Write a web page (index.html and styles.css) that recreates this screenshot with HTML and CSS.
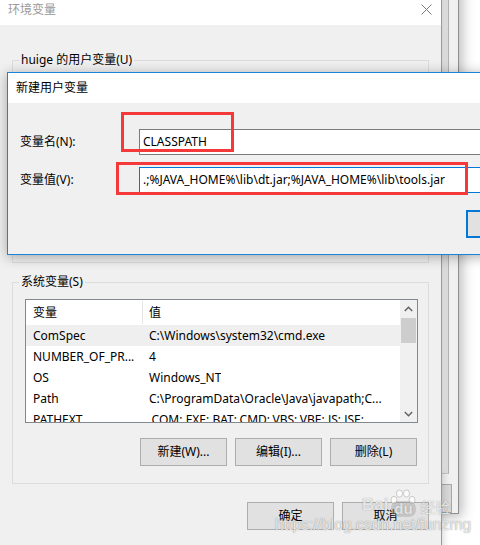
FILE: index.html
```html
<!DOCTYPE html>
<html lang="zh-CN">
<head>
<meta charset="utf-8">
<title>新建用户变量</title>
<link rel="stylesheet" href="styles.css">
</head>
<body>
<div class="desktop">
  <div class="syswin">
    <div class="sys-panel"></div>
    <div class="sys-btn"></div>
  </div>

  <div class="envwin">
    <div class="titlebar env-title">
      <span class="title-text inactive">环境变量</span>
      <svg class="close" width="11" height="11" viewBox="0 0 11 11"><path d="M0.5 0.5 L10.5 10.5 M10.5 0.5 L0.5 10.5" stroke="#7a7a7a" stroke-width="1" fill="none"/></svg>
    </div>
    <div class="env-body">
      <div class="group user-group">
        <div class="group-title">huige 的用户变量(U)</div>
      </div>
      <div class="group sys-group">
        <div class="group-title">系统变量(S)</div>
        <div class="listview">
          <div class="list-main">
            <div class="list-head"><span class="c1">变量</span><span class="c2">值</span></div>
            <div class="row sel"><span class="c1">ComSpec</span><span class="c2">C:\Windows\system32\cmd.exe</span></div>
            <div class="row"><span class="c1">NUMBER_OF_PR...</span><span class="c2">4</span></div>
            <div class="row"><span class="c1">OS</span><span class="c2">Windows_NT</span></div>
            <div class="row"><span class="c1">Path</span><span class="c2">C:\ProgramData\Oracle\Java\javapath;C...</span></div>
            <div class="row"><span class="c1">PATHEXT</span><span class="c2">.COM;.EXE;.BAT;.CMD;.VBS;.VBE;.JS;.JSE;...</span></div>
          </div>
          <div class="scrollbar">
            <div class="sb-arrow"><svg width="9" height="6" viewBox="0 0 9 6"><path d="M0.8 5 L4.5 1.3 L8.2 5" stroke="#606060" stroke-width="1.4" fill="none"/></svg></div>
            <div class="sb-track"><div class="sb-thumb"></div></div>
            <div class="sb-arrow"><svg width="9" height="6" viewBox="0 0 9 6"><path d="M0.8 1 L4.5 4.7 L8.2 1" stroke="#606060" stroke-width="1.4" fill="none"/></svg></div>
          </div>
        </div>
        <div class="btn-row group-btns">
          <button class="btn">新建(W)...</button>
          <button class="btn">编辑(I)...</button>
          <button class="btn">删除(L)</button>
        </div>
      </div>
      <div class="btn-row bottom-btns">
        <button class="btn">确定</button>
        <button class="btn">取消</button>
      </div>
    </div>
  </div>

  <div class="dialog">
    <div class="titlebar dlg-title"><span class="title-text">新建用户变量</span></div>
    <div class="dlg-body">
      <div class="field"><span class="field-label">变量名(N):</span><div class="input">CLASSPATH</div></div>
      <div class="field second"><span class="field-label">变量值(V):</span><div class="input focus">.;%JAVA_HOME%\lib\dt.jar;%JAVA_HOME%\lib\tools.jar</div></div>
      <div class="dlg-buttons">
        <button class="btn default">确定</button>
        <button class="btn">取消</button>
      </div>
    </div>
  </div>

  <div class="mark mark-name"></div>
  <div class="mark mark-value"></div>

  <div class="wm-baidu">
    <span class="wm-bai">Bai</span>
    <span class="wm-paw">
      <svg width="28" height="18" viewBox="0 0 28 18"><g fill="rgba(255,255,255,0.75)" stroke="rgba(120,120,120,0.45)" stroke-width="0.8"><ellipse cx="5" cy="11" rx="3" ry="3.6"/><ellipse cx="10.5" cy="4.5" rx="3" ry="3.6"/><ellipse cx="17.5" cy="4.5" rx="3" ry="3.6"/><ellipse cx="23" cy="11" rx="3" ry="3.6"/></g></svg>
      <span class="wm-du">du</span>
    </span>
    <span class="wm-jy">经验</span>
  </div>
  <div class="wm-url">https://blog.csdn.net/funzmg</div>
</div>
</body>
</html>
```

FILE: styles.css
```css
* { box-sizing: border-box; }

html, body {
  margin: 0;
  padding: 0;
}

body {
  font-family: "Noto Sans", "Noto Sans CJK SC", sans-serif;
  font-size: 12px;
  color: #000;
  background: #fff;
}

.desktop {
  position: relative;
  width: 480px;
  height: 545px;
  overflow: hidden;
  background: #fff;
}

/* far background window */
.syswin {
  position: absolute;
  left: -20px;
  top: -20px;
  width: 479px;
  height: 534px;
  background: #f0f0f0;
  border: 1px solid #8e8e8e;
  box-shadow: 3px 3px 12px rgba(0, 0, 0, 0.28);
}

.sys-panel {
  position: absolute;
  left: 0;
  top: 0;
  width: 468px;
  height: 493px;
  border-right: 1px solid #b4b4b4;
  border-bottom: 1px solid #c8c8c8;
  box-shadow: -3px 0 4px rgba(0, 0, 0, 0.08) inset;
}

.sys-btn {
  position: absolute;
  left: 449px;
  top: 503px;
  width: 22px;
  height: 29px;
  background: #d8d8d8;
  border: 1px solid #a8a8a8;
}

/* environment variables window */
.envwin {
  position: absolute;
  left: -1px;
  top: -6px;
  width: 443px;
  height: 600px;
  background: #f0f0f0;
  border: 1px solid #9a9a9a;
  box-shadow: 0 0 8px rgba(0, 0, 0, 0.22);
  display: flex;
  flex-direction: column;
}

.titlebar {
  height: 30px;
  background: #fff;
  display: flex;
  align-items: center;
  flex-shrink: 0;
}

.env-title {
  padding: 0 9px 0 8px;
  justify-content: space-between;
}

.title-text {
  line-height: 16px;
}

.title-text.inactive {
  color: #9a9a9a;
}

.close {
  display: block;
  margin-top: -1px;
}

.env-body {
  padding: 35px 12px 0 12px;
  display: flex;
  flex-direction: column;
}

.group {
  border: 1px solid #dcdcdc;
  display: flex;
  flex-direction: column;
}

.user-group {
  height: 203px;
}

.sys-group {
  margin-top: 19px;
  height: 202px;
}

.group-title {
  align-self: flex-start;
  margin: -9px 0 0 6px;
  padding: 0 2px;
  line-height: 16px;
  height: 16px;
  background: #f0f0f0;
}

.listview {
  margin: 9px 0 0 12px;
  width: 393px;
  height: 124px;
  border: 1px solid #828790;
  background: #fff;
  display: flex;
}

.list-main {
  flex: 1;
  overflow: hidden;
  min-width: 0;
}

.list-head, .row {
  display: flex;
  white-space: nowrap;
}

.list-head {
  height: 25px;
  align-items: center;
}

.row {
  height: 21px;
  align-items: center;
}

.row.sel {
  background: #efefef;
}

.c1 {
  width: 117px;
  padding-left: 7px;
  overflow: hidden;
  flex-shrink: 0;
  line-height: 16px;
}

.c2 {
  padding-left: 6px;
  overflow: hidden;
  line-height: 16px;
}

.list-head .c1 {
  border-right: 1px solid #e5e5e5;
  height: 23px;
  line-height: 23px;
}

.list-head .c2 {
  line-height: 23px;
}

.scrollbar {
  width: 17px;
  background: #f0f0f0;
  display: flex;
  flex-direction: column;
  flex-shrink: 0;
}

.sb-arrow {
  height: 17px;
  display: flex;
  align-items: center;
  justify-content: center;
}

.sb-arrow svg {
  display: block;
}

.sb-track {
  flex: 1;
  padding: 1px 1px 0 1px;
}

.sb-thumb {
  height: 25px;
  background: #cdcdcd;
}

.btn-row {
  display: flex;
  justify-content: flex-end;
  gap: 8px;
}

.group-btns {
  margin-top: 15px;
  padding-right: 11px;
}

.bottom-btns {
  margin-top: 18px;
}

.btn {
  width: 87px;
  height: 28px;
  padding: 0;
  margin: 0;
  background: #e1e1e1;
  border: 1px solid #adadad;
  font-family: "Noto Sans", "Noto Sans CJK SC", sans-serif;
  font-size: 12px;
  line-height: 16px;
  color: #000;
}

.btn.default {
  border: 2px solid #0078d7;
}

/* new user variable dialog */
.dialog {
  position: absolute;
  left: 7px;
  top: 72px;
  width: 654px;
  height: 183px;
  border: 1px solid #1c84d8;
  background: #f0f0f0;
  box-shadow: 0 2px 12px rgba(0, 0, 0, 0.32);
  display: flex;
  flex-direction: column;
}

.dlg-title {
  padding-left: 8px;
}

.dlg-body {
  flex: 1;
  background: #f0f0f0;
  padding: 26px 12px 0 12px;
}

.field {
  display: flex;
  align-items: center;
  height: 26px;
}

.field.second {
  margin-top: 12px;
}

.field-label {
  width: 119px;
  flex-shrink: 0;
  line-height: 16px;
}

.input {
  width: 505px;
  height: 26px;
  background: #fff;
  border: 1px solid #7a7a7a;
  padding-left: 3px;
  line-height: 24px;
  white-space: nowrap;
  overflow: hidden;
}

.input.focus {
  border-color: #0078d7;
}

.dlg-buttons {
  margin-top: 17px;
  display: flex;
  justify-content: flex-end;
  gap: 8px;
}

/* red annotation boxes */
.mark {
  position: absolute;
  border: 3px solid #f5393b;
}

.mark-name {
  left: 121px;
  top: 112px;
  width: 113px;
  height: 40px;
}

.mark-value {
  left: 116px;
  top: 162px;
  width: 352px;
  height: 33px;
}

/* watermark */
.wm-baidu {
  position: absolute;
  left: 362px;
  top: 489px;
  display: flex;
  align-items: flex-end;
  font-family: "Liberation Sans", Arial, sans-serif;
  color: rgba(255, 255, 255, 0.8);
  text-shadow: 0 0 1px rgba(90, 90, 90, 0.7);
}

.wm-bai {
  font-size: 17px;
  font-weight: bold;
  line-height: 20px;
  margin-bottom: 2px;
}

.wm-paw {
  position: relative;
  display: flex;
  flex-direction: column;
  align-items: center;
  width: 28px;
  margin-left: 1px;
}

.wm-paw svg {
  display: block;
}

.wm-du {
  margin-top: -6px;
  font-size: 15px;
  font-weight: bold;
  line-height: 16px;
  padding: 0 3px;
  border-radius: 7px;
  background: rgba(150, 150, 150, 0.35);
}

.wm-jy {
  font-family: "Noto Sans CJK SC", sans-serif;
  font-size: 15px;
  line-height: 18px;
  margin-left: 3px;
  margin-bottom: 1px;
}

.wm-url {
  position: absolute;
  left: 275px;
  top: 516px;
  font-family: "Liberation Sans", Arial, sans-serif;
  font-size: 15.7px;
  line-height: 18px;
  color: rgba(255, 255, 255, 0.8);
  text-shadow: 0 0 1px rgba(80, 80, 80, 0.75);
  white-space: nowrap;
}
```
